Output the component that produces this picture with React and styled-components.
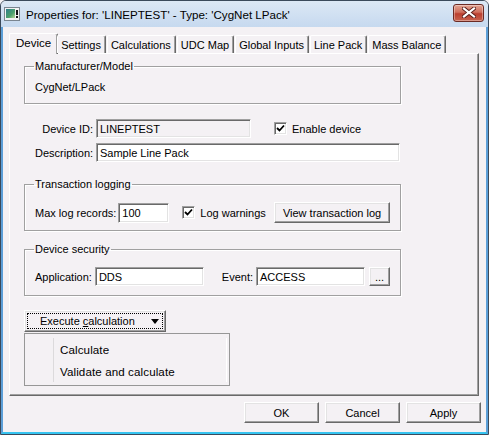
import React from "react";
import styled, { createGlobalStyle } from "styled-components";

const Global = createGlobalStyle`
  html, body {
    margin: 0;
    padding: 0;
    background: #f4f1f4;
  }
  body {
    font-family: "Liberation Sans", Arial, sans-serif;
    font-size: 11px;
    color: #000;
  }
`;

const face = "#f4f1f4";

const Window = styled.div`
  width: 489px;
  height: 435px;
  box-sizing: border-box;
  display: flex;
  flex-direction: column;
  border: 1px solid #3b4a5b;
  border-radius: 6px 6px 0 0;
  overflow: hidden;
  background: ${face};
`;

const TitleBar = styled.div`
  height: 26px;
  flex: none;
  display: flex;
  align-items: center;
  padding: 0 4px 0 3px;
  background: linear-gradient(#dce8f5, #c6d9ef);
  font-size: 11.6px;
`;

const TitleText = styled.span`
  margin-left: 6px;
  flex: 1;
  color: #000;
`;

const CloseBtn = styled.div`
  width: 31px;
  height: 18px;
  box-sizing: border-box;
  margin-top: -3px;
  border: 1px solid #6b2a24;
  border-radius: 3px;
  background: linear-gradient(#e4a493 0%, #cf6f5d 45%, #bb3f2f 55%, #c8634f 100%);
  display: flex;
  align-items: center;
  justify-content: center;
  box-shadow: inset 0 0 0 1px rgba(255, 255, 255, 0.35);
`;

const Body = styled.div`
  flex: 1;
  display: flex;
  flex-direction: column;
  border-left: 2px solid #5c9fd8;
  border-right: 2px solid #5c9fd8;
  border-bottom: 2px solid #36c4f0;
  padding: 6px 0 0 6px;
`;

const TabRow = styled.div`
  display: flex;
  align-items: flex-end;
  height: 20px;
  padding-left: 1px;
  position: relative;
  z-index: 1;
`;

const Tab = styled.div`
  box-sizing: border-box;
  height: ${(p) => (p.$active ? "21px" : "18px")};
  margin: 0 ${(p) => (p.$active ? "-1px" : "1px")} ${(p) => (p.$active ? "-1px" : "0")} ${(p) => (p.$active ? "-1px" : "0")};
  padding: ${(p) => (p.$active ? "3px 6px 0" : "0 4px 0 3px")};
  display: flex;
  align-items: ${(p) => (p.$active ? "flex-start" : "center")};
  background: ${face};
  border-top: 1px solid #fff;
  border-left: 1px solid #fff;
  border-right: 1px solid #696969;
  border-radius: 2px 2px 0 0;
  box-shadow: inset -1px 0 0 #a0a0a0;
  white-space: nowrap;
  font-size: ${(p) => (p.$active ? "11.5px" : "11px")};
`;

const Panel = styled.div`
  width: 470px;
  height: 343px;
  box-sizing: border-box;
  border-top: 1px solid #fff;
  border-left: 1px solid #fff;
  border-right: 1px solid #696969;
  border-bottom: 1px solid #696969;
  box-shadow: inset -1px -1px 0 #a0a0a0;
  padding: 6px 0 0 14px;
  display: flex;
  flex-direction: column;
  align-items: flex-start;
`;

const Group = styled.fieldset`
  width: 377px;
  box-sizing: border-box;
  margin: ${(p) => p.$mt || 0}px 0 0 0;
  padding: ${(p) => p.$pt || 8}px 10px ${(p) => p.$pb || 8}px 9px;
  border: 1px solid #a0a0a0;
  box-shadow: 1px 1px 0 #fff, inset 1px 1px 0 #fff;
  min-width: 0;
`;

const Legend = styled.legend`
  padding: 0 1px;
  line-height: 13px;
  font-size: 11px;
`;

const Plain = styled.div`
  line-height: 13px;
  padding-left: 1px;
`;

const FormGrid = styled.div`
  display: grid;
  grid-template-columns: 58px 155px auto;
  column-gap: 3px;
  row-gap: 5px;
  align-items: center;
  margin-top: 15px;
  margin-left: 11px;
`;

const Label = styled.label`
  text-align: ${(p) => (p.$right ? "right" : "left")};
  white-space: nowrap;
`;

const Input = styled.div`
  box-sizing: border-box;
  width: ${(p) => p.$w}px;
  height: ${(p) => p.$h || 19}px;
  background: ${(p) => (p.$readonly ? face : "#fff")};
  border-top: 1px solid #a0a0a0;
  border-left: 1px solid #a0a0a0;
  border-bottom: 1px solid #fff;
  border-right: 1px solid #fff;
  box-shadow: inset 1px 1px 0 #696969, inset -1px -1px 0 #e3e3e3;
  padding: 0 3px;
  display: flex;
  align-items: center;
  white-space: nowrap;
`;

const CheckWrap = styled.div`
  display: flex;
  align-items: center;
  gap: 5px;
  margin-left: ${(p) => p.$ml || 0}px;
  white-space: nowrap;
`;

const Box = styled.span`
  width: 13px;
  height: 13px;
  box-sizing: border-box;
  background: #fff;
  border-top: 1px solid #a0a0a0;
  border-left: 1px solid #a0a0a0;
  border-bottom: 1px solid #fff;
  border-right: 1px solid #fff;
  box-shadow: inset 1px 1px 0 #696969, inset -1px -1px 0 #e3e3e3;
  display: flex;
  align-items: center;
  justify-content: center;
`;

const Row = styled.div`
  display: flex;
  align-items: center;
  gap: ${(p) => p.$gap || 3}px;
`;

const Button = styled.button`
  box-sizing: border-box;
  width: ${(p) => p.$w}px;
  height: ${(p) => p.$h || 21}px;
  margin-left: ${(p) => (p.$push ? "auto" : `${p.$ml || 0}px`)};
  padding: 0;
  background: ${face};
  font-family: "Liberation Sans", Arial, sans-serif;
  font-size: 11px;
  color: #000;
  border-top: 1px solid #fff;
  border-left: 1px solid #fff;
  border-right: 1px solid #696969;
  border-bottom: 1px solid #696969;
  box-shadow: inset -1px -1px 0 #a0a0a0, inset 1px 1px 0 #e3e3e3;
  display: flex;
  align-items: center;
  justify-content: center;
`;

const Split = styled.div`
  position: relative;
  margin-top: 14px;
`;

const DropButton = styled(Button)`
  justify-content: flex-start;
  padding: 2px;
`;

const Focus = styled.span`
  flex: 1;
  height: 100%;
  box-sizing: border-box;
  border: 1px dotted #000;
  display: flex;
  align-items: center;
  padding-left: 12px;
  padding-right: 3px;
  font-size: 11px;
`;

const Arrow = styled.span`
  margin-left: auto;
  width: 0;
  height: 0;
  border-left: 4px solid transparent;
  border-right: 4px solid transparent;
  border-top: 5px solid #000;
`;

const Menu = styled.div`
  position: absolute;
  left: 0;
  top: 23px;
  width: 206px;
  box-sizing: border-box;
  border: 1px solid #979797;
  background: ${face};
  padding: 4px 2px 3px 28px;
  display: flex;
  flex-direction: column;
`;

const MenuItem = styled.div`
  height: 22px;
  display: flex;
  align-items: center;
  padding-left: 6px;
  border-left: 1px solid #dcdadc;
  box-shadow: -1px 0 0 #fff inset;
  font-size: 11.6px;
  letter-spacing: 0.1px;
`;

const Footer = styled.div`
  display: flex;
  justify-content: flex-end;
  gap: 6px;
  padding: 6px 5px 0 0;
`;

const Hotkey = styled.span`
  text-decoration: underline;
`;

const WindowIcon = () => (
  <svg width="16" height="14" viewBox="0 0 16 14">
    <defs>
      <linearGradient id="ig" x1="0" y1="0" x2="1" y2="1">
        <stop offset="0" stopColor="#2f7d8c" />
        <stop offset="0.6" stopColor="#4ba06a" />
        <stop offset="1" stopColor="#b9d79a" />
      </linearGradient>
    </defs>
    <rect x="0.5" y="0.5" width="15" height="13" fill="#f2f2f2" stroke="#7a8590" />
    <rect x="2" y="2" width="9" height="9" fill="url(#ig)" />
    <rect x="12" y="3" width="2" height="5" fill="#111" />
    <rect x="12" y="9" width="2" height="2" fill="#111" />
  </svg>
);

const CloseX = () => (
  <svg width="14" height="11" viewBox="0 0 14 11">
    <path d="M2 1.5 L12 9.5 M12 1.5 L2 9.5" stroke="#5a1f1a" strokeWidth="4" strokeLinecap="square" />
    <path d="M2 1.5 L12 9.5 M12 1.5 L2 9.5" stroke="#fff" strokeWidth="2.2" strokeLinecap="square" />
  </svg>
);

const Check = () => (
  <svg width="9" height="9" viewBox="0 0 9 9">
    <path d="M1 4 L3.5 6.5 L8 1.5" fill="none" stroke="#000" strokeWidth="1.8" />
  </svg>
);

const tabs = [
  "Device",
  "Settings",
  "Calculations",
  "UDC Map",
  "Global Inputs",
  "Line Pack",
  "Mass Balance",
];

export default function App() {
  return (
    <>
      <Global />
      <Window>
        <TitleBar>
          <WindowIcon />
          <TitleText>Properties for: 'LINEPTEST' - Type: 'CygNet LPack'</TitleText>
          <CloseBtn>
            <CloseX />
          </CloseBtn>
        </TitleBar>
        <Body>
          <TabRow>
            {tabs.map((t, i) => (
              <Tab key={t} $active={i === 0}>
                {t}
              </Tab>
            ))}
          </TabRow>
          <Panel>
            <Group $pt={8} $pb={9}>
              <Legend>Manufacturer/Model</Legend>
              <Plain>CygNet/LPack</Plain>
            </Group>

            <FormGrid>
              <Label $right>Device ID:</Label>
              <Input $w={155} $readonly>
                LINEPTEST
              </Input>
              <CheckWrap $ml={20}>
                <Box>
                  <Check />
                </Box>
                Enable device
              </CheckWrap>
              <Label $right>Description:</Label>
              <Input $w={304} style={{ gridColumn: "2 / 4" }}>
                Sample Line Pack
              </Input>
            </FormGrid>

            <Group $mt={16} $pt={11} $pb={7}>
              <Legend>Transaction logging</Legend>
              <Row $gap={2}>
                <Label style={{ marginLeft: 1 }}>Max log records:</Label>
                <Input $w={51} $h={20}>
                  100
                </Input>
                <CheckWrap $ml={11}>
                  <Box>
                    <Check />
                  </Box>
                  Log warnings
                </CheckWrap>
                <Button $w={116} $push>
                  View transaction log
                </Button>
              </Row>
            </Group>

            <Group $mt={12} $pt={11} $pb={9}>
              <Legend>Device security</Legend>
              <Row>
                <Label style={{ marginLeft: 1 }}>Application:</Label>
                <Input $w={109}>DDS</Input>
                <Label style={{ marginLeft: "auto" }}>Event:</Label>
                <Input $w={109}>ACCESS</Input>
                <Button $w={21} $h={19} $ml={1}>
                  ...
                </Button>
              </Row>
            </Group>

            <Split>
              <DropButton $w={142} $h={22}>
                <Focus>
                  Execute&nbsp;<Hotkey>c</Hotkey>alculation
                  <Arrow />
                </Focus>
              </DropButton>
              <Menu>
                <MenuItem>Calculate</MenuItem>
                <MenuItem>Validate and calculate</MenuItem>
              </Menu>
            </Split>
          </Panel>
          <Footer>
            <Button $w={75}>OK</Button>
            <Button $w={75}>Cancel</Button>
            <Button $w={75}>Apply</Button>
          </Footer>
        </Body>
      </Window>
    </>
  );
}
